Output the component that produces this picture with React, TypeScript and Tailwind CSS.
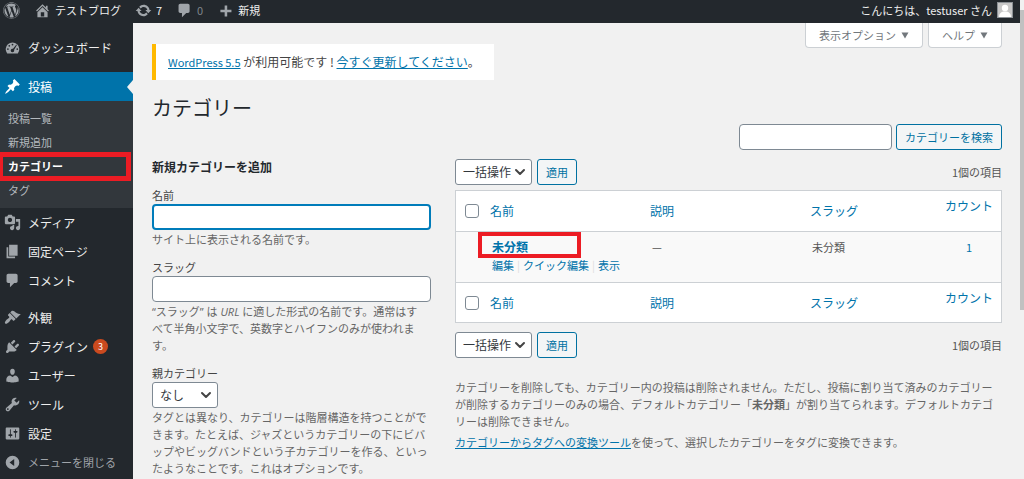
import type { ReactNode } from "react";
import { ChevronDown } from "lucide-react";
import { FaWordpress } from "react-icons/fa";

const ICONS = {
  home: "M16 8.5l1.53 1.53-1.06 1.06L10 4.6l-6.47 6.49-1.06-1.06L10 2.5l4 4v-2h2v4zm-6-2.46l6 5.99V18H4v-5.97zM12 17v-5H8v5h4z",
  update:
    "M10.2 3.28c3.53 0 6.43 2.61 6.92 6h2.08l-3.5 4-3.5-4h2.32c-.45-1.97-2.21-3.45-4.32-3.45-1.45 0-2.73.71-3.54 1.78L4.95 5.66C6.23 4.2 8.11 3.28 10.2 3.28zm-.4 13.44c-3.52 0-6.43-2.61-6.92-6H.8l3.5-4c1.17 1.33 2.33 2.67 3.5 4H5.48c.45 1.97 2.21 3.45 4.32 3.45 1.45 0 2.73-.71 3.54-1.78l1.71 1.95c-1.28 1.46-3.15 2.38-5.25 2.38z",
  comment: "M5 2h9c1.1 0 2 .9 2 2v7c0 1.1-.9 2-2 2h-2l-5 5v-5H5c-1.1 0-2-.9-2-2V4c0-1.1.9-2 2-2z",
  plus: "M17 9v3h-5v5H9v-5H4V9h5V4h3v5z",
  dashboard:
    "M3.76 17h12.48A8 8 0 1 0 3.76 17zM10 5.5a1 1 0 1 1 0 2 1 1 0 0 1 0-2zM6.2 7a1 1 0 1 1 0 2 1 1 0 0 1 0-2zM14.6 6.6l.6.6-3.4 5.6a2 2 0 1 1-1.2-1.2zM4.6 10.8a1 1 0 1 1 0 2 1 1 0 0 1 0-2zM15.6 10.8a1 1 0 1 1 0 2 1 1 0 0 1 0-2z",
  post: "M10.44 3.02l1.82-1.82 6.36 6.35-1.83 1.82c-1.05-.68-2.48-.57-3.41.36l-.75.75c-.92.93-1.04 2.35-.35 3.41l-1.83 1.82-2.41-2.41-2.8 2.79c-.42.42-3.38 2.71-3.8 2.29s1.86-3.39 2.28-3.81l2.79-2.79L4.1 9.36l1.83-1.82c1.05.69 2.48.57 3.4-.36l.75-.75c.93-.92 1.05-2.35.36-3.41z",
  media:
    "M13 11V4c0-.55-.45-1-1-1h-1.67L9 1H5L3.67 3H2c-.55 0-1 .45-1 1v7c0 .55.45 1 1 1h10c.55 0 1-.45 1-1zM7 4.5c1.38 0 2.5 1.12 2.5 2.5S8.38 9.5 7 9.5 4.5 8.38 4.5 7 5.62 4.5 7 4.5zM14 6h5v10.5c0 1.38-1.12 2.5-2.5 2.5S14 17.88 14 16.5s1.12-2.5 2.5-2.5c.17 0 .34.02.5.05V9h-3V6zm-4 8.05V13h2v3.5c0 1.38-1.12 2.5-2.5 2.5S7 17.88 7 16.5 8.12 14 9.5 14c.17 0 .34.02.5.05z",
  page: "M6 15V2h10v13H6zm-1 1h8v2H3V5h2v11z",
  appearance:
    "M14.48 11.06L7.41 3.99l1.5-1.5c.5-.56 2.3-.47 3.51.32 1.21.8 1.43 1.28 2.91 2.1 1.18.64 2.45 1.26 4.45.85zm-.71.71L6.7 4.7 4.93 6.47c-.39.39-.39 1.02 0 1.41l1.06 1.06c.39.39.39 1.03 0 1.42-.6.6-1.43 1.11-2.21 1.69-.35.26-.7.53-1.01.84C1.43 14.23.4 16.08 1.4 17.07c.99 1 2.84-.03 4.18-1.36.31-.31.58-.66.85-1.02.57-.78 1.08-1.61 1.69-2.21.39-.39 1.02-.39 1.41 0l1.06 1.06c.39.39 1.02.39 1.41 0z",
  plugins:
    "M13.11 4.36L9.87 7.6 8 5.73l3.24-3.24c.35-.34 1.05-.2 1.56.32.52.51.66 1.21.31 1.55zm-8 1.77l.91-1.12 9.01 9.01-1.19.84c-.71.71-2.63 1.16-3.82 1.16H6.14L4.9 17.26c-.59.59-1.54.59-2.12 0-.59-.58-.59-1.53 0-2.12l1.24-1.24v-3.88c0-1.13.4-3.19 1.09-3.89zm7.26 3.97l3.24-3.24c.34-.35 1.04-.21 1.55.31.52.51.66 1.21.31 1.55l-3.24 3.25z",
  users:
    "M10 9.25c-2.27 0-2.73-3.44-2.73-3.44C7 4.02 7.82 2 9.97 2c2.16 0 2.98 2.02 2.71 3.81 0 0-.41 3.44-2.68 3.44zm0 2.57L12.72 10c2.39 0 4.52 2.33 4.52 4.53v2.49s-3.65 1.13-7.24 1.13c-3.65 0-7.24-1.13-7.24-1.13v-2.49c0-2.25 1.94-4.48 4.47-4.48z",
  tools:
    "M16.68 9.77c-1.34 1.34-3.3 1.67-4.95.99l-5.41 6.52c-.99.99-2.59.99-3.58 0s-.99-2.59 0-3.57l6.52-5.42c-.68-1.65-.35-3.61.99-4.95 1.28-1.28 3.12-1.62 4.72-1.06l-2.89 2.89 2.82 2.82 2.86-2.87c.53 1.58.18 3.39-1.08 4.65zM3.81 16.21c.4.39 1.04.39 1.43 0 .4-.4.4-1.04 0-1.43-.39-.4-1.03-.4-1.43 0-.39.39-.39 1.03 0 1.43z",
  settings:
    "M18 16V4c0-.55-.45-1-1-1H3c-.55 0-1 .45-1 1v12c0 .55.45 1 1 1h14c.55 0 1-.45 1-1zM8 11h1c.55 0 1 .45 1 1s-.45 1-1 1H8v1.5c0 .28-.22.5-.5.5s-.5-.22-.5-.5V13H6c-.55 0-1-.45-1-1s.45-1 1-1h1V5.5c0-.28.22-.5.5-.5s.5.22.5.5V11zm5-2h-1c-.55 0-1-.45-1-1s.45-1 1-1h1V5.5c0-.28.22-.5.5-.5s.5.22.5.5V7h1c.55 0 1 .45 1 1s-.45 1-1 1h-1v5.5c0 .28-.22.5-.5.5s-.5-.22-.5-.5V9z",
  collapse: "M10 2a8 8 0 1 1 0 16 8 8 0 0 1 0-16zM12 14V6l-5.5 4z",
};

type IconName = keyof typeof ICONS;

function Icon({ name }: { name: IconName }) {
  return (
    <svg viewBox="0 0 20 20" className="h-[17px] w-[17px] shrink-0" fill="currentColor" aria-hidden="true">
      <path fillRule="evenodd" d={ICONS[name]} />
    </svg>
  );
}

function BarLink({ icon, children }: { icon: IconName; children: ReactNode }) {
  return (
    <a href="#" className="flex items-center gap-1 text-[#eee]">
      <span className="text-[#a0a5aa]">
        <Icon name={icon} />
      </span>
      {children}
    </a>
  );
}

function AdminBar() {
  return (
    <header className="flex h-[23px] items-center justify-between bg-[#23282d] pr-[7px] pb-[3px] pl-[3px] leading-4">
      <div className="flex items-center gap-[14px]">
        <a href="#" aria-label="WordPress" className="text-[#a0a5aa]">
          <FaWordpress size={17} />
        </a>
        <BarLink icon="home">テストブログ</BarLink>
        <BarLink icon="update">7</BarLink>
        <BarLink icon="comment">
          <span className="text-[#7f868c]">0</span>
        </BarLink>
        <BarLink icon="plus">新規</BarLink>
      </div>
      <a href="#" className="flex items-center gap-[5px] text-[#eee]">
        こんにちは、testuser さん
        <svg viewBox="0 0 16 16" className="h-4 w-4" aria-hidden="true">
          <rect width="16" height="16" fill="#8c9196" />
          <rect x="1" y="1" width="14" height="14" fill="#c8c8c8" />
          <circle cx="8" cy="6" r="3.2" fill="#fff" />
          <path d="M2 15c0-3.500 2-5 4.500-5.500h3C12 10 14 11.500 14 15z" fill="#fff" />
        </svg>
      </a>
    </header>
  );
}

function MenuItem({ icon, label, badge }: { icon: IconName; label: string; badge?: number }) {
  return (
    <li>
      <a href="#" className="flex h-[29px] items-center gap-[7px] pl-1 text-xs text-[#eee]">
        <span className="text-[#a0a5aa]">
          <Icon name={icon} />
        </span>
        {label}
        {badge && (
          <span className="-ml-0.5 grid h-[15px] w-[15px] place-items-center rounded-full bg-[#ca4a1f] text-[9px] leading-none text-white">
            {badge}
          </span>
        )}
      </a>
    </li>
  );
}

function Sidebar() {
  return (
    <nav aria-label="メインメニュー" className="w-[133px] shrink-0 bg-[#23282d] pt-[10px]">
      <ul>
        <MenuItem icon="dashboard" label="ダッシュボード" />
        <li className="mt-[10px]">
          <a href="#" className="relative flex h-[29px] items-center gap-[7px] bg-[#0073aa] pl-1 text-xs text-white">
            <Icon name="post" />
            投稿
            <span className="absolute top-[8px] right-0 border-y-[7px] border-r-[6px] border-y-transparent border-r-[#f1f1f1]" />
          </a>
          <ul className="bg-[#32373c] pt-[5px] pb-[6px] text-[#b4b9be]">
            <SubItem>投稿一覧</SubItem>
            <SubItem>新規追加</SubItem>
            <SubItem current>カテゴリー</SubItem>
            <SubItem>タグ</SubItem>
          </ul>
        </li>
        <MenuItem icon="media" label="メディア" />
        <MenuItem icon="page" label="固定ページ" />
        <MenuItem icon="comment" label="コメント" />
      </ul>
      <ul className="mt-2">
        <MenuItem icon="appearance" label="外観" />
        <MenuItem icon="plugins" label="プラグイン" badge={3} />
        <MenuItem icon="users" label="ユーザー" />
        <MenuItem icon="tools" label="ツール" />
        <MenuItem icon="settings" label="設定" />
      </ul>
      <button className="flex h-[29px] w-full items-center gap-[7px] pl-1 text-[#a0a5aa]">
        <Icon name="collapse" />
        メニューを閉じる
      </button>
    </nav>
  );
}

function SubItem({ current, children }: { current?: boolean; children: ReactNode }) {
  return (
    <li className="relative">
      <a href="#" className={current ? "flex h-6 items-center pl-2 font-bold text-white" : "flex h-6 items-center pl-2"}>
        {children}
      </a>
      {current && <span className="pointer-events-none absolute -top-[2px] right-[2px] -bottom-[3px] left-0 border-[5px] border-l-[3px] border-[#ec1c24]" />}
    </li>
  );
}

function Select({ id, label, option, wide }: { id: string; label?: string; option: string; wide?: boolean }) {
  return (
    <span className={wide ? "relative block w-[77px]" : "relative block w-[66px]"}>
      <select
        id={id}
        aria-label={label}
        className="block h-[26px] w-full appearance-none rounded-[3px] border border-[#7e8993] bg-white pl-[7px] text-xs text-[#32373c]"
      >
        <option>{option}</option>
      </select>
      <ChevronDown size={16} strokeWidth={3} className="pointer-events-none absolute top-[5px] right-1 text-[#444]" />
    </span>
  );
}

function Button({ children }: { children: ReactNode }) {
  return (
    <button className="h-[26px] shrink-0 rounded-[3px] border border-[#0071a1] bg-[#f3f5f6] px-2 whitespace-nowrap text-[#0071a1]">
      {children}
    </button>
  );
}

function TableNav({ id }: { id: string }) {
  return (
    <div className="flex items-center gap-[5px]">
      <Select id={id} label="一括操作を選択" option="一括操作" wide />
      <Button>適用</Button>
      <span className="ml-auto text-[#555]">1個の項目</span>
    </div>
  );
}

function HeadRow({ foot }: { foot?: boolean }) {
  const cell = foot ? "h-10 border-t border-[#ccd0d4] p-0" : "h-[41px] border-b border-[#ccd0d4] p-0";
  return (
    <tr className="bg-white text-left text-xs text-[#0073aa] [&>th]:font-normal">
      <th className={cell}>
        <input
          type="checkbox"
          aria-label="すべて選択"
          className="ml-[9px] block h-[14px] w-[14px] appearance-none rounded-[3px] border border-[#7e8993] bg-white"
        />
      </th>
      <th className={cell}>
        <a href="#">名前</a>
      </th>
      <th className={cell}>
        <a href="#">説明</a>
      </th>
      <th className={cell}>
        <a href="#">スラッグ</a>
      </th>
      <th className={`${cell} text-center align-top`}>
        <a href="#" className="block pt-[7px] leading-4">カウント</a>
      </th>
    </tr>
  );
}

function CategoryTable() {
  return (
    <table className="mt-[5px] w-full table-fixed border-separate border-spacing-0 border border-[#ccd0d4]">
      <colgroup>
        <col className="w-[34px]" />
        <col />
        <col />
        <col className="w-[127px]" />
        <col className="w-[64px]" />
      </colgroup>
      <thead>
        <HeadRow />
      </thead>
      <tbody>
        <tr className="h-[50px] bg-[#f9f9f9] align-top text-[#555]">
          <td />
          <td className="relative pt-[6px] pl-0.5">
            <a href="#" className="block text-xs leading-[18px] font-bold text-[#0073aa]">
              未分類
            </a>
            <span className="pointer-events-none absolute top-0 -left-3 h-[26px] w-[103px] border-4 border-[#ec1c24]" />
            <div className="flex gap-[3px] leading-[18px] whitespace-nowrap text-[#ddd] [&>a]:text-[#0073aa]">
              <a href="#">編集</a>|<a href="#">クイック編集</a>|<a href="#">表示</a>
            </div>
          </td>
          <td className="pt-[6px] pl-0.5 leading-[18px]">—</td>
          <td className="pt-[6px] pl-0.5 leading-[18px]">未分類</td>
          <td className="pt-[6px] text-center leading-[18px]">
            <a href="#" className="text-[#0073aa]">1</a>
          </td>
        </tr>
      </tbody>
      <tfoot>
        <HeadRow foot />
      </tfoot>
    </table>
  );
}

function AddCategoryForm() {
  return (
    <form className="leading-[17px] text-[#666]">
      <h2 className="mb-3 text-xs leading-4 font-bold text-[#23282d]">新規カテゴリーを追加</h2>
      <label htmlFor="name" className="block text-[#444]">名前</label>
      <input id="name" type="text" className="block h-[26px] w-full rounded-[4px] border-2 border-[#007cba] bg-white px-2" />
      <p className="mt-px">サイト上に表示される名前です。</p>

      <label htmlFor="slug" className="mt-[11px] block text-[#444]">スラッグ</label>
      <input id="slug" type="text" className="block h-[26px] w-full rounded-[4px] border border-[#7e8993] bg-white px-2" />
      <p className="mt-px pr-1 font-['Open_Sans','Noto_Sans_CJK_JP',sans-serif]">
        “スラッグ” は <i>URL</i> に適した形式の名前です。通常はすべて半角小文字で、英数字とハイフンのみが使われます。
      </p>

      <label htmlFor="parent" className="mt-[11px] block text-[#444]">親カテゴリー</label>
      <Select id="parent" option="なし" />
      <p className="mt-px">
        タグとは異なり、カテゴリーは階層構造を持つことができます。たとえば、ジャズというカテゴリーの下にビバップやビッグバンドという子カテゴリーを作る、といったようなことです。これはオプションです。
      </p>
    </form>
  );
}

function MetaTab({ children }: { children: ReactNode }) {
  return (
    <button className="flex h-[25px] items-center gap-[5px] rounded-b-[4px] border border-t-0 border-[#ccd0d4] bg-white px-[13px] whitespace-nowrap text-[#72777c]">
      {children}
      <svg viewBox="0 0 8 7" className="h-[7px] w-2" fill="currentColor" aria-hidden="true">
        <path d="M0.500 0.500h7L4 6.500z" />
      </svg>
    </button>
  );
}

export default function App() {
  return (
    <div
      lang="ja"
      className="flex min-h-screen bg-[#f1f1f1] font-['Noto_Sans_CJK_JP','Open_Sans',sans-serif] text-[11px] text-[#444] [line-break:loose] [text-spacing-trim:space-all]"
    >
      <div className="flex min-w-0 flex-1 flex-col">
        <AdminBar />
        <div className="flex flex-1">
          <Sidebar />
          <main className="min-w-0 flex-1 pr-[18px] pl-[19px]">
            <div className="flex items-start justify-between">
              <p className="mt-[21px] flex h-9 items-center border-l-4 border-[#ffb900] bg-white pr-[14px] pl-3 text-xs">
                <span>
                  <a href="#" className="text-[11px] text-[#0073aa] underline">WordPress 5.5</a> が利用可能です !{" "}
                  <a href="#" className="text-[#0073aa] underline">今すぐ更新してください</a>。
                </span>
              </p>
              <div className="flex gap-[5px]">
                <MetaTab>表示オプション</MetaTab>
                <MetaTab>ヘルプ</MetaTab>
              </div>
            </div>
            <h1 className="mt-[14px] text-xl leading-7 text-[#23282d]">カテゴリー</h1>
            <form role="search" className="mt-0.5 flex justify-end gap-1">
              <input
                type="search"
                aria-label="カテゴリーを検索"
                className="h-[26px] w-[153px] rounded-[4px] border border-[#7e8993] bg-white px-2"
              />
              <Button>カテゴリーを検索</Button>
            </form>
            <div className="mt-[9px] grid grid-cols-[minmax(0,279fr)_minmax(0,547fr)] gap-6">
              <AddCategoryForm />
              <section>
                <TableNav id="bulk-top" />
                <CategoryTable />
                <div className="mt-[9px]">
                  <TableNav id="bulk-bottom" />
                </div>
                <div className="mt-[21px] leading-[17px] text-[#666]">
                  <p>
                    カテゴリーを削除しても、カテゴリー内の投稿は削除されません。ただし、投稿に割り当て済みのカテゴリーが削除するカテゴリーのみの場合、デフォルトカテゴリー「<b>未分類</b>」が割り当てられます。デフォルトカテゴリーは削除できません。
                  </p>
                  <p className="mt-1">
                    <a href="#" className="text-[#0073aa] underline">カテゴリーからタグへの変換ツール</a>
                    を使って、選択したカテゴリーをタグに変換できます。
                  </p>
                </div>
              </section>
            </div>
          </main>
        </div>
      </div>
      {/* scroll track */}
      <div className="w-1 shrink-0 bg-[#f1f1f1] pt-[10px]" aria-hidden="true">
        <div className="h-[300px] bg-[#c1c1c1]" />
      </div>
    </div>
  );
}
